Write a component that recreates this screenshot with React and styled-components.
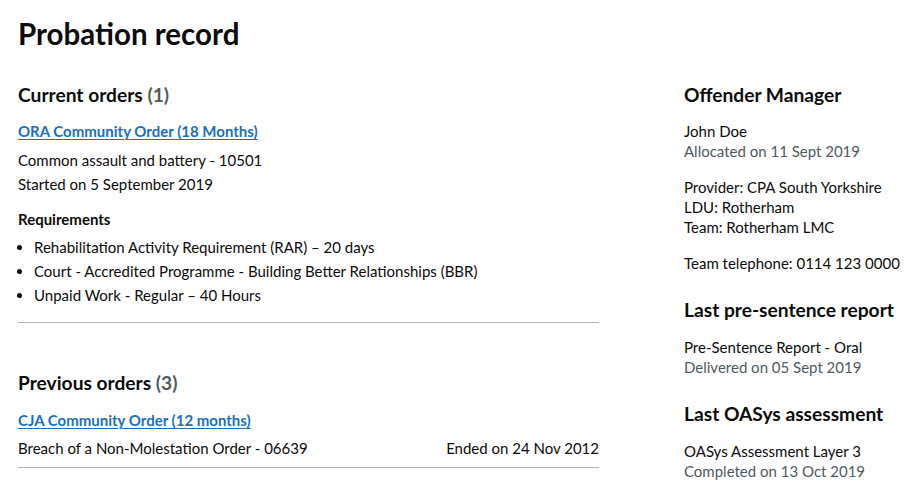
import React from "react";
import styled, { createGlobalStyle } from "styled-components";

const Global = createGlobalStyle`
  html, body { margin: 0; padding: 0; background: #fff; }
  body { font-family: Lato, "Liberation Sans", Arial, sans-serif; color: #0b0c0c; -webkit-font-smoothing: antialiased; }
  * { box-sizing: border-box; }
`;

const Page = styled.main`
  padding: 14px 18px 0 18px;
  height: 485px;
  overflow: hidden;
`;

const Title = styled.h1`
  margin: 0 0 28px 0;
  font-size: 29.5px;
  line-height: 40px;
  font-weight: 700;
`;

const Grid = styled.div`
  display: grid;
  grid-template-columns: 581px 1fr;
  column-gap: 85px;
  align-items: start;
`;

const Heading = styled.h2`
  margin: 0;
  font-size: 19.2px;
  line-height: 25px;
  font-weight: 700;
  white-space: nowrap;
`;

const Count = styled.span`
  color: #505a5f;
`;

const Section = styled.section`
  margin-bottom: ${(p) => p.$mb || 0}px;
`;

const OrderLink = styled.a`
  display: block;
  margin-top: ${(p) => p.$mt || 12}px;
  font-size: 15px;
  line-height: 24px;
  font-weight: 700;
  color: #1d70b8;
  text-decoration: underline;
  text-underline-offset: 2px;
  text-decoration-thickness: 1px;
`;

const Body = styled.p`
  margin: 0;
  font-size: 15px;
  line-height: 24px;
`;

const OrderBlock = styled.div`
  border-bottom: 1px solid #b1b4b6;
  padding-bottom: ${(p) => p.$pb}px;
`;

const Details = styled.div`
  margin-top: 5px;
`;

const SubHeading = styled.h3`
  margin: 11px 0 4px 0;
  font-size: 15px;
  line-height: 24px;
  font-weight: 700;
`;

const List = styled.ul`
  margin: 0;
  padding: 0 0 0 16px;
  list-style: disc;
  font-size: 15px;
  line-height: 24px;
`;

const Row = styled.div`
  display: flex;
  justify-content: space-between;
  margin-top: 4px;
  font-size: 15px;
  line-height: 24px;
`;

const Side = styled.aside`
  display: flex;
  flex-direction: column;
  gap: 24px;
`;

const SideBlock = styled.div`
  display: flex;
  flex-direction: column;
  gap: ${(p) => p.$gap || 15}px;
`;

const Group = styled.div`
  display: flex;
  flex-direction: column;
  gap: 16px;
`;

const Lines = styled.div`
  font-size: 15px;
  line-height: 20px;
`;

const Muted = styled.div`
  color: #505a5f;
`;

export default function App() {
  return (
    <>
      <Global />
      <Page>
        <Title>Probation record</Title>
        <Grid>
          <div>
            <Section $mb={47}>
              <Heading>
                Current orders <Count>(1)</Count>
              </Heading>
              <OrderBlock $pb={15}>
                <OrderLink href="#">ORA Community Order (18 Months)</OrderLink>
                <Details>
                  <Body>Common assault and battery - 10501</Body>
                  <Body>Started on 5 September 2019</Body>
                </Details>
                <SubHeading>Requirements</SubHeading>
                <List>
                  <li>Rehabilitation Activity Requirement (RAR) – 20 days</li>
                  <li>Court - Accredited Programme - Building Better Relationships (BBR)</li>
                  <li>Unpaid Work - Regular – 40 Hours</li>
                </List>
              </OrderBlock>
            </Section>
            <Section>
              <Heading>
                Previous orders <Count>(3)</Count>
              </Heading>
              <OrderBlock $pb={7}>
                <OrderLink href="#" $mt={13}>CJA Community Order (12 months)</OrderLink>
                <Row>
                  <span>Breach of a Non-Molestation Order - 06639</span>
                  <span>Ended on 24 Nov 2012</span>
                </Row>
              </OrderBlock>
              <OrderBlock $pb={7}>
                <OrderLink href="#">CJA Community Order (12 months)</OrderLink>
              </OrderBlock>
            </Section>
          </div>
          <Side>
            <SideBlock $gap={14}>
              <Heading>Offender Manager</Heading>
              <Group>
                <Lines>
                  <div>John Doe</div>
                  <Muted>Allocated on 11 Sept 2019</Muted>
                </Lines>
                <Lines>
                  <div>Provider: CPA South Yorkshire</div>
                  <div>LDU: Rotherham</div>
                  <div>Team: Rotherham LMC</div>
                </Lines>
                <Lines>
                  <div>Team telephone: 0114 123 0000</div>
                </Lines>
              </Group>
            </SideBlock>
            <SideBlock>
              <Heading>Last pre-sentence report</Heading>
              <Lines>
                <div>Pre-Sentence Report - Oral</div>
                <Muted>Delivered on 05 Sept 2019</Muted>
              </Lines>
            </SideBlock>
            <SideBlock>
              <Heading>Last OASys assessment</Heading>
              <Lines>
                <div>OASys Assessment Layer 3</div>
                <Muted>Completed on 13 Oct 2019</Muted>
              </Lines>
            </SideBlock>
          </Side>
        </Grid>
      </Page>
    </>
  );
}
